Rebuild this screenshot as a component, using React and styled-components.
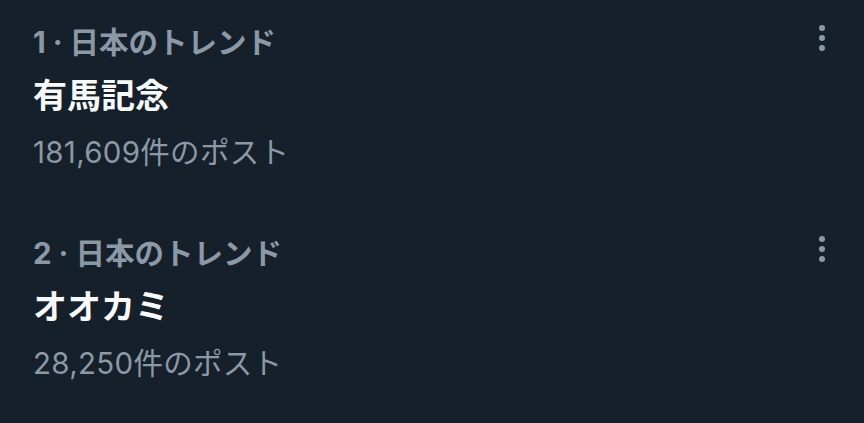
import styled, { createGlobalStyle } from 'styled-components'

const GlobalStyle = createGlobalStyle`
  html, body {
    margin: 0;
    padding: 0;
    background: #15202b;
  }
  body {
    font-family: Inter, "Noto Sans CJK JP", sans-serif;
  }
`

const trends = [
  { rank: 1, title: '有馬記念', count: '181,609' },
  { rank: 2, title: 'オオカミ', count: '28,250' },
]

const List = styled.div`
  display: flex;
  flex-direction: column;
  gap: 59px;
  padding: 22px 38px 0 33px;
  height: 423px;
  box-sizing: border-box;
  background: #15202b;
`

const Item = styled.div`
  display: flex;
  flex-direction: column;
`

const Head = styled.div`
  display: flex;
  justify-content: space-between;
  align-items: flex-start;
`

const Label = styled.div`
  color: #8b98a5;
  font-size: 29.5px;
  font-weight: 700;
  line-height: 40px;
`

const Title = styled.div`
  color: #f7f9f9;
  font-size: 34px;
  font-weight: 700;
  line-height: 68px;
`

const Count = styled.div`
  color: #8b98a5;
  font-size: 29.5px;
  font-weight: 400;
  line-height: 44px;
  letter-spacing: 0.3px;
`

const More = styled.svg`
  margin-top: 2px;
  flex: none;
`

const MoreIcon = () => (
  <More width="8" height="28" viewBox="0 0 8 28" fill="#8b98a5">
    <circle cx="4" cy="4" r="3" />
    <circle cx="4" cy="14" r="3" />
    <circle cx="4" cy="24" r="3" />
  </More>
)

const App = () => (
  <>
    <GlobalStyle />
    <List>
      {trends.map((t) => (
        <Item key={t.rank}>
          <Head>
            <Label>{t.rank} · 日本のトレンド</Label>
            <MoreIcon />
          </Head>
          <Title>{t.title}</Title>
          <Count>{t.count}件のポスト</Count>
        </Item>
      ))}
    </List>
  </>
)

export default App
